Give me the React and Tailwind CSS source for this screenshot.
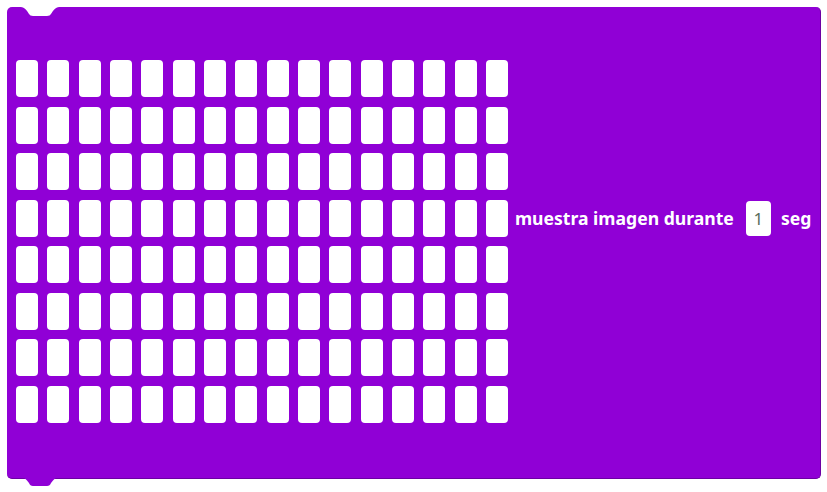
const ROWS = 8;
const COLS = 16;

function Notch() {
  return (
    <svg
      className="absolute left-[14px] top-[-1px]"
      width="38"
      height="11"
      viewBox="0 0 38 11"
    >
      <path d="M0 0 L0 1 Q4 1 8 8 Q9 10 12 10 L26 10 Q29 10 30 8 Q34 1 38 1 L38 0 Z" fill="#ffffff" />
    </svg>
  );
}

function Tab() {
  return (
    <svg
      className="absolute left-[14px] bottom-[-9px]"
      width="38"
      height="10"
      viewBox="0 0 38 10"
    >
      <path d="M0 0 Q4 0 8 6 Q9 9 12 9 L26 9 Q29 9 30 6 Q34 0 38 0 Z" fill="#9000d6" />
    </svg>
  );
}

export default function App() {
  const cells = [];
  for (let i = 0; i < ROWS * COLS; i++) cells.push(i);

  return (
    <div className="w-[827px] h-[492px] bg-white pt-[7px] pl-[7px] font-['Noto_Sans',Arial,sans-serif]">
      <div className="relative w-[814px] h-[472px] rounded-[5px] bg-[#9000d6] border-r border-b border-[#6c00a3]">
        <Notch />
        <Tab />
        <div className="flex items-start pl-[9px] pt-[53px]">
          <div className="grid grid-cols-[repeat(16,22px)] gap-x-[9.33px] gap-y-[9.57px]">
            {cells.map((c) => (
              <div key={c} className="w-[22px] h-[37px] rounded-[4px] bg-white" />
            ))}
          </div>
          <div className="flex items-center ml-[7px] mt-[141px] text-white font-bold text-[17.6px] leading-none">
            <span>muestra imagen durante</span>
            <span className="ml-[12px] flex items-center justify-center w-[25px] h-[35px] rounded-[4px] bg-white text-[#5a6e5a] font-normal text-[17px]">
              1
            </span>
            <span className="ml-[10px]">seg</span>
          </div>
        </div>
      </div>
    </div>
  );
}
